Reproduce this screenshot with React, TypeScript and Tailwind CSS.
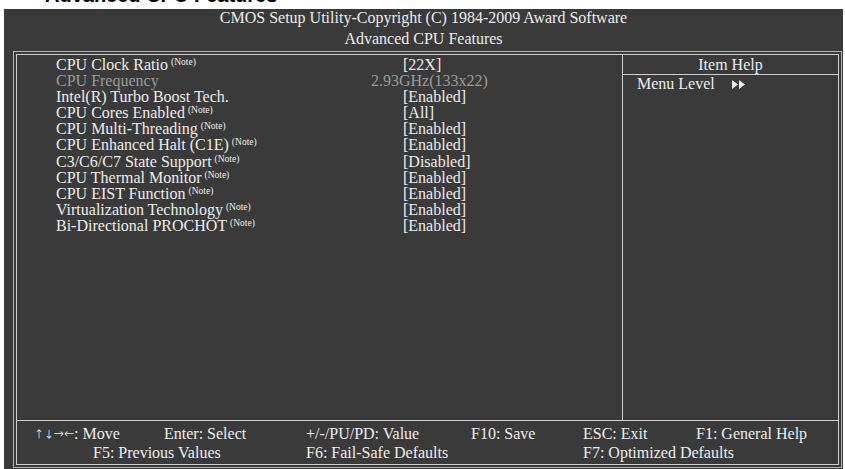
import React from "react";

const serif = { fontFamily: '"Liberation Serif", "Times New Roman", serif' };

type Item = { label: string; note: boolean; value: string; dim?: boolean };

const items: Item[] = [
  { label: "CPU Clock Ratio", note: true, value: "[22X]" },
  { label: "CPU Frequency", note: false, value: "2.93GHz(133x22)", dim: true },
  { label: "Intel(R) Turbo Boost Tech.", note: false, value: "[Enabled]" },
  { label: "CPU Cores Enabled", note: true, value: "[All]" },
  { label: "CPU Multi-Threading", note: true, value: "[Enabled]" },
  { label: "CPU Enhanced Halt (C1E)", note: true, value: "[Enabled]" },
  { label: "C3/C6/C7 State Support", note: true, value: "[Disabled]" },
  { label: "CPU Thermal Monitor", note: true, value: "[Enabled]" },
  { label: "CPU EIST Function", note: true, value: "[Enabled]" },
  { label: "Virtualization Technology", note: true, value: "[Enabled]" },
  { label: "Bi-Directional PROCHOT", note: true, value: "[Enabled]" },
];

function Arrows() {
  return (
    <svg width="13" height="9" viewBox="0 0 13 9" className="inline-block">
      <polygon points="0,0 6,4.5 0,9" fill="#ececec" />
      <polygon points="7,0 13,4.5 7,9" fill="#ececec" />
    </svg>
  );
}

const arrowFont = { fontFamily: '"Noto Sans CJK JP", "DejaVu Sans", sans-serif' };

export default function App() {
  return (
    <div className="w-[845px] h-[469px] bg-white overflow-hidden" style={serif}>
      <div className="h-[9px] overflow-hidden pl-[45px]">
        <div
          className="mt-[-15px] text-[20px] leading-[20px] font-bold text-black whitespace-nowrap"
          style={{ fontFamily: '"Liberation Sans", Arial, sans-serif' }}
        >
          Advanced CPU Features
        </div>
      </div>
      <div className="ml-[4px] w-[839px] h-[460px] bg-[#3a3a3a] text-[#ededed] text-[16px]">
        <div className="flex flex-col items-center">
          <div className="h-[16px] leading-[16px] mt-[1px]">CMOS Setup Utility-Copyright (C) 1984-2009 Award Software</div>
          <div className="h-[16px] leading-[16px] mt-[5px]">Advanced CPU Features</div>
        </div>
        <div className="ml-[9px] mt-[4px] w-[829px] h-[417px] border border-[#b4b4b4] p-[2px]">
          <div className="w-full h-full border border-[#cfcfcf] flex flex-col">
            <div className="h-[366px] shrink-0 flex border-b border-[#cfcfcf]">
              <div className="w-[606px] shrink-0 border-r border-[#cfcfcf] pl-[39px] pt-[2px]">
                {items.map((it) => (
                  <div key={it.label} className="flex h-[16.1px] leading-[16px]">
                    <div className={`w-[347px] shrink-0 whitespace-nowrap ${it.dim ? "text-[#9a9a9a]" : ""}`}>
                      {it.label}
                      {it.note && (
                        <span className="ml-[3px] text-[9.5px] leading-[9px] align-top relative top-[1px]">(Note)</span>
                      )}
                    </div>
                    <div className={`shrink-0 whitespace-nowrap ${it.dim ? "text-[#9a9a9a] ml-[-32px]" : ""}`}>{it.value}</div>
                  </div>
                ))}
              </div>
              <div className="flex-1 flex flex-col">
                <div className="h-[20px] leading-[19px] border-b border-[#cfcfcf] text-center">Item Help</div>
                <div className="h-[16px] leading-[16px] mt-[1px] pl-[14px] flex items-center whitespace-nowrap">
                  <span>Menu Level</span>
                  <span className="ml-[17px] flex items-center">
                    <Arrows />
                  </span>
                </div>
              </div>
            </div>
            <div className="pt-[5px] leading-[16px] whitespace-nowrap">
              <div className="flex h-[16px] pl-[17px]">
                <div className="w-[130px] flex items-center">
                  <span className="inline-block w-[10px] text-center text-[10px] leading-[16px]" style={arrowFont}>↑</span>
                  <span className="inline-block w-[10px] text-center text-[10px] leading-[16px]" style={arrowFont}>↓</span>
                  <span className="inline-block w-[10px] text-center text-[10px] leading-[16px]" style={arrowFont}>→</span>
                  <span className="inline-block w-[10px] text-center text-[10px] leading-[16px]" style={arrowFont}>←</span>
                  <span>: Move</span>
                </div>
                <div className="w-[142px]">Enter: Select</div>
                <div className="w-[165px]">+/-/PU/PD: Value</div>
                <div className="w-[112px]">F10: Save</div>
                <div className="w-[113px]">ESC: Exit</div>
                <div>F1: General Help</div>
              </div>
              <div className="flex h-[16px] mt-[3px] pl-[76px]">
                <div className="w-[213px]">F5: Previous Values</div>
                <div className="w-[277px]">F6: Fail-Safe Defaults</div>
                <div>F7: Optimized Defaults</div>
              </div>
            </div>
          </div>
        </div>
      </div>
    </div>
  );
}
